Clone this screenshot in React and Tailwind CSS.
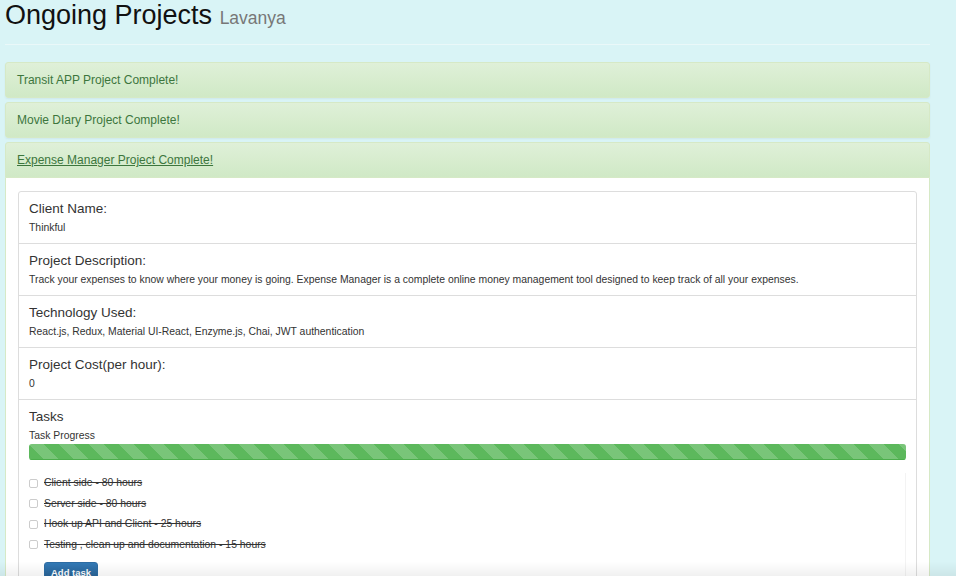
import React from 'react';

const font = { fontFamily: '"Liberation Sans", Arial, sans-serif' };

const projects = [
  { id: 1, title: 'Transit APP Project Complete!' },
  { id: 2, title: 'Movie DIary Project Complete!' },
  { id: 3, title: 'Expense Manager Project Complete!', open: true },
];

const details = [
  { label: 'Client Name:', value: 'Thinkful' },
  {
    label: 'Project Description:',
    value:
      'Track your expenses to know where your money is going. Expense Manager is a complete online money management tool designed to keep track of all your expenses.',
  },
  {
    label: 'Technology Used:',
    value: 'React.js, Redux, Material UI-React, Enzyme.js, Chai, JWT authentication',
  },
  { label: 'Project Cost(per hour):', value: '0' },
];

const tasks = [
  'Client side - 80 hours',
  'Server side - 80 hours',
  'Hook up API and Client - 25 hours',
  'Testing , clean up and documentation - 15 hours',
];

const PanelHeading = ({ title, open }) => (
  <div
    className={`h-9 flex items-center px-[11px] bg-gradient-to-b from-[#dff0d8] to-[#d0e9c6] border border-[#d6e9c6] text-[#3c763d] text-[12px] ${
      open ? 'rounded-t-[3px]' : 'rounded-[3px] shadow-[0_1px_2px_rgba(0,0,0,0.05)]'
    }`}
  >
    <span className={open ? 'underline' : ''}>{title}</span>
  </div>
);

const App = () => {
  return (
    <div className="min-h-[576px] bg-[#d9f4f6] text-[#333]" style={font}>
      <div className="w-[925px] ml-[5px]">
        <div className="h-[45px] border-b border-[#eaf8f9]">
          <h1 className="h-[30px] text-[27px] leading-[30px] text-[#111] whitespace-nowrap">
            Ongoing Projects <span className="text-[17.5px] leading-none text-[#777]">Lavanya</span>
          </h1>
        </div>

        <div className="mt-[17px] flex flex-col gap-[4px]">
          {projects.map((p) =>
            p.open ? (
              <div key={p.id}>
                <PanelHeading title={p.title} open />
                <div className="bg-white border-x border-[#d6e9c6] px-3 pt-[13px]">
                  <div className="border border-[#ddd] rounded-t-[3px] divide-y divide-[#ddd]">
                    {details.map((d) => (
                      <div key={d.label} className="px-[10px] pt-[9px] pb-[7px]">
                        <h4 className="text-[13.5px] leading-[15px] mb-1">{d.label}</h4>
                        <p className="text-[10.4px] leading-[16px]">{d.value}</p>
                      </div>
                    ))}
                    <div className="px-[10px] pt-[9px] pb-3">
                      <h4 className="text-[13.5px] leading-[15px] mb-1">Tasks</h4>
                      <p className="text-[10.4px] leading-[16px]">Task Progress</p>
                      <div className="h-4 rounded-[3px] bg-[#f5f5f5] overflow-hidden">
                        <div className="h-full w-full bg-[#5cb85c] border-b border-[#4cae4c] bg-[linear-gradient(45deg,rgba(255,255,255,.18)_25%,transparent_25%,transparent_50%,rgba(255,255,255,.18)_50%,rgba(255,255,255,.18)_75%,transparent_75%,transparent)] bg-size-[30px_30px]"></div>
                      </div>
                      <div className="mt-[13px] border-r border-[#f3f3f3]">
                        {tasks.map((t) => (
                          <label key={t} className="h-[20.5px] flex items-center text-[10.4px]">
                            <span className="w-[9px] h-[9px] rounded-[2px] border border-[#ccc] bg-white shrink-0"></span>
                            <span className="ml-[6px] line-through">{t}</span>
                          </label>
                        ))}
                        <button className="mt-[7px] ml-[15px] h-[22px] px-[6px] rounded-[3px] border border-[#2e6da4] bg-gradient-to-b from-[#337ab7] to-[#265a88] text-white text-[9.5px] font-bold">
                          Add task
                        </button>
                      </div>
                    </div>
                  </div>
                </div>
              </div>
            ) : (
              <PanelHeading key={p.id} title={p.title} />
            )
          )}
        </div>
      </div>
      <div className="pointer-events-none fixed left-0 right-0 bottom-0 h-[14px] bg-gradient-to-b from-transparent to-[rgba(0,0,0,0.06)]"></div>
    </div>
  );
};

export default App;
